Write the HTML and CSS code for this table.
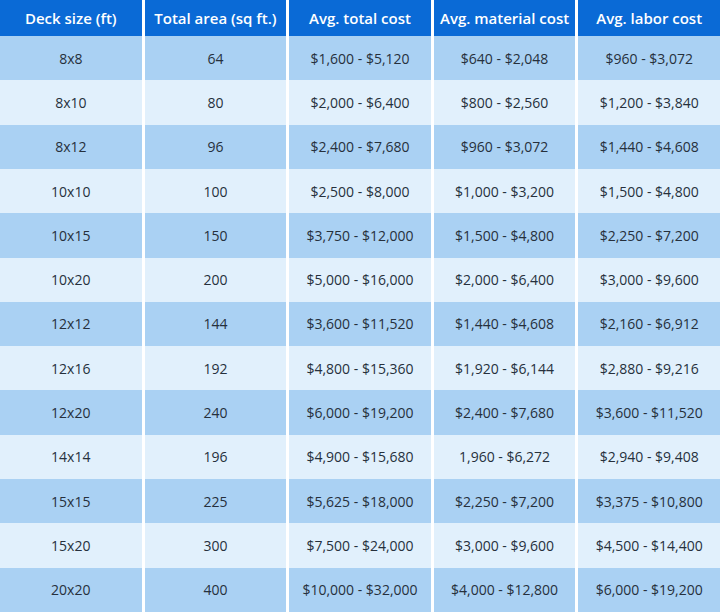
FILE: index.html
```html
<!DOCTYPE html>
<html lang="en">
<head>
<meta charset="utf-8">
<title>Deck cost table</title>
<link rel="stylesheet" href="styles.css">
</head>
<body>
<div class="table">
  <div class="cell head">Deck size (ft)</div>
  <div class="cell head">Total area (sq ft.)</div>
  <div class="cell head">Avg. total cost</div>
  <div class="cell head">Avg. material cost</div>
  <div class="cell head">Avg. labor cost</div>

  <div class="cell dark">8x8</div><div class="cell dark">64</div><div class="cell dark">$1,600 - $5,120</div><div class="cell dark">$640 - $2,048</div><div class="cell dark">$960 - $3,072</div>
  <div class="cell light">8x10</div><div class="cell light">80</div><div class="cell light">$2,000 - $6,400</div><div class="cell light">$800 - $2,560</div><div class="cell light">$1,200 - $3,840</div>
  <div class="cell dark">8x12</div><div class="cell dark">96</div><div class="cell dark">$2,400 - $7,680</div><div class="cell dark">$960 - $3,072</div><div class="cell dark">$1,440 - $4,608</div>
  <div class="cell light">10x10</div><div class="cell light">100</div><div class="cell light">$2,500 - $8,000</div><div class="cell light">$1,000 - $3,200</div><div class="cell light">$1,500 - $4,800</div>
  <div class="cell dark">10x15</div><div class="cell dark">150</div><div class="cell dark">$3,750 - $12,000</div><div class="cell dark">$1,500 - $4,800</div><div class="cell dark">$2,250 - $7,200</div>
  <div class="cell light">10x20</div><div class="cell light">200</div><div class="cell light">$5,000 - $16,000</div><div class="cell light">$2,000 - $6,400</div><div class="cell light">$3,000 - $9,600</div>
  <div class="cell dark">12x12</div><div class="cell dark">144</div><div class="cell dark">$3,600 - $11,520</div><div class="cell dark">$1,440 - $4,608</div><div class="cell dark">$2,160 - $6,912</div>
  <div class="cell light">12x16</div><div class="cell light">192</div><div class="cell light">$4,800 - $15,360</div><div class="cell light">$1,920 - $6,144</div><div class="cell light">$2,880 - $9,216</div>
  <div class="cell dark">12x20</div><div class="cell dark">240</div><div class="cell dark">$6,000 - $19,200</div><div class="cell dark">$2,400 - $7,680</div><div class="cell dark">$3,600 - $11,520</div>
  <div class="cell light">14x14</div><div class="cell light">196</div><div class="cell light">$4,900 - $15,680</div><div class="cell light">1,960 - $6,272</div><div class="cell light">$2,940 - $9,408</div>
  <div class="cell dark">15x15</div><div class="cell dark">225</div><div class="cell dark">$5,625 - $18,000</div><div class="cell dark">$2,250 - $7,200</div><div class="cell dark">$3,375 - $10,800</div>
  <div class="cell light">15x20</div><div class="cell light">300</div><div class="cell light">$7,500 - $24,000</div><div class="cell light">$3,000 - $9,600</div><div class="cell light">$4,500 - $14,400</div>
  <div class="cell dark">20x20</div><div class="cell dark">400</div><div class="cell dark">$10,000 - $32,000</div><div class="cell dark">$4,000 - $12,800</div><div class="cell dark">$6,000 - $19,200</div>
</div>
</body>
</html>
```
FILE: styles.css
```css
html, body {
  margin: 0;
  padding: 0;
  background: #ffffff;
}
.table {
  display: grid;
  grid-template-columns: repeat(5, 1fr);
  grid-template-rows: 36px repeat(13, 1fr);
  column-gap: 3px;
  width: 720px;
  height: 612px;
  font-family: "Open Sans", "Noto Sans", sans-serif;
  font-size: 14px;
}
.cell {
  display: flex;
  align-items: center;
  justify-content: center;
  white-space: nowrap;
  color: #26303c;
  font-weight: 500;
}
.head {
  background: #0a6ad6;
  color: #ffffff;
  font-weight: 600;
  font-size: 15px;
}
.dark {
  background: #aad1f3;
}
.light {
  background: #e1f0fc;
}
```
